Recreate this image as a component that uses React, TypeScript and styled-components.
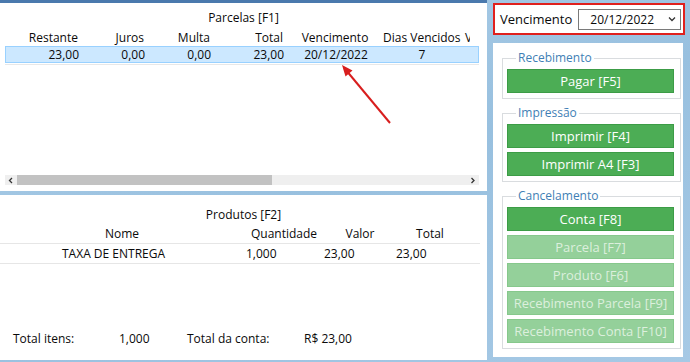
import React from "react";
import styled, { createGlobalStyle } from "styled-components";

type Align = "left" | "right" | "center";

interface IColumn {
  width: number;
  align: Align;
  pad?: number;
  clip?: boolean;
}

const GlobalStyle = createGlobalStyle`
  html, body {
    margin: 0;
    padding: 0;
  }
  body {
    font-family: "Open Sans", "Noto Sans", "DejaVu Sans", sans-serif;
    color: #0a0a0a;
    background: #9fc5e3;
  }
`;

const Screen = styled.div`
  position: relative;
  width: 690px;
  height: 362px;
  box-sizing: border-box;
  overflow: hidden;
  display: flex;
  gap: 6px;
  padding-right: 5px;
  background: linear-gradient(160deg, #b1d1ea 0%, #98c0df 50%, #a6c9e5 100%);
`;

const LeftColumn = styled.div`
  width: 487px;
  display: flex;
  flex-direction: column;
  gap: 4px;
  border-top: 3px solid #4a79ad;
`;

const Panel = styled.section<{ $height: number }>`
  position: relative;
  height: ${props => props.$height}px;
  box-sizing: border-box;
  display: flex;
  flex-direction: column;
  overflow: hidden;
  background: #fff;
`;

const PanelTitle = styled.div<{ $top: number }>`
  padding-top: ${props => props.$top}px;
  font-size: 12px;
  line-height: 16px;
  text-align: center;
`;

const GridArea = styled.div`
  margin: 4px 8px 0 5px;
  overflow: hidden;
`;

const GridRow = styled.div<{ $columns: IColumn[]; $height: number; $selected?: boolean; $line?: boolean }>`
  display: grid;
  grid-template-columns: ${props => props.$columns.map(c => `${c.width}px`).join(" ")};
  height: ${props => props.$height}px;
  box-sizing: border-box;
  align-items: center;
  font-size: 12px;
  line-height: 16px;
  white-space: nowrap;
  background: ${props => (props.$selected ? "#cce8ff" : "transparent")};
  border: ${props => (props.$selected ? "1px solid #99d1ff" : "none")};
  border-bottom: ${props =>
    props.$selected ? "1px solid #99d1ff" : props.$line ? "1px solid #e6e6e6" : "none"};
`;

const Cell = styled.div<{ $align: Align; $pad?: number; $clip?: boolean }>`
  text-align: ${props => props.$align};
  padding-right: ${props => (props.$align === "right" ? props.$pad ?? 4 : 0)}px;
  padding-left: ${props => (props.$align === "left" ? props.$pad ?? 0 : 0)}px;
  overflow: ${props => (props.$clip ? "hidden" : "visible")};
`;

const Separator = styled.div`
  height: 1px;
  margin-top: 1px;
  background: #e8e8e8;
`;

const HScroll = styled.div`
  margin: auto 8px 6px 5px;
  height: 10px;
  display: flex;
  align-items: center;
  background: #efefef;
`;

const ScrollArrow = styled.div`
  width: 12px;
  height: 10px;
  display: flex;
  align-items: center;
  justify-content: center;
`;

const ScrollThumb = styled.div`
  width: 255px;
  height: 10px;
  background: #c2c2c2;
`;

const ScrollTrack = styled.div`
  flex: 1;
`;

const ProdutosArea = styled.div`
  margin: 2px 7px 0 0;
`;

const Footer = styled.div`
  margin-top: auto;
  padding: 0 0 13px 13px;
  display: grid;
  grid-template-columns: 106px 68px 117px auto;
  font-size: 12px;
  line-height: 16px;
`;

const RightColumn = styled.div`
  width: 192px;
  padding-top: 3px;
  display: flex;
  flex-direction: column;
  gap: 8px;
`;

const DueBox = styled.div`
  height: 32px;
  box-sizing: border-box;
  display: flex;
  align-items: center;
  gap: 6px;
  padding: 0 2px 0 5px;
  border: 2px solid #e0201d;
  background: #fff;
`;

const DueLabel = styled.span`
  font-size: 13px;
  line-height: 16px;
`;

const DueSelect = styled.div`
  width: 104px;
  height: 21px;
  box-sizing: border-box;
  display: flex;
  align-items: center;
  justify-content: space-between;
  padding: 0 4px 0 11px;
  border: 1px solid #7a7a7a;
  font-size: 12px;
`;

const ActionPanel = styled.div`
  height: 314px;
  margin-right: 2px;
  box-sizing: border-box;
  display: flex;
  flex-direction: column;
  gap: 6px;
  padding: 7px 2px 0 9px;
  background: #fff;
`;

const Group = styled.fieldset`
  margin: 0;
  min-width: 0;
  padding: 3px 6px 5px 4px;
  border: 1px solid #d9dcdf;
  display: flex;
  flex-direction: column;
  gap: 4px;
`;

const GroupLegend = styled.legend`
  margin-left: 9px;
  padding: 0 2px;
  font-size: 12px;
  line-height: 16px;
  color: #3f7fb5;
`;

const ActionButton = styled.button<{ $off?: boolean }>`
  height: 24px;
  box-sizing: border-box;
  padding: 0;
  border: 1px solid ${props => (props.$off ? "#86c88c" : "#3c9c46")};
  background: ${props => (props.$off ? "#94d09a" : "#4cad55")};
  color: ${props => (props.$off ? "#dcefdd" : "#ffffff")};
  font-family: inherit;
  font-size: 13px;
  line-height: 16px;
  text-align: center;
`;

const Annotation = styled.svg`
  position: absolute;
  left: 0;
  top: 0;
  pointer-events: none;
`;

const parcelaColumns: IColumn[] = [
  { width: 77, align: "right" },
  { width: 66, align: "right" },
  { width: 66, align: "right" },
  { width: 73, align: "right" },
  { width: 96, align: "center" },
  { width: 76, align: "center" },
  { width: 11, align: "left", pad: 6, clip: true },
];

const parcelaHeader = ["Restante", "Juros", "Multa", "Total", "Vencimento", "Dias Vencidos", "Valor Pago"];
const parcelaValues = ["23,00", "0,00", "0,00", "23,00", "20/12/2022", "7", ""];

const produtoHeadCols: IColumn[] = [
  { width: 244, align: "center" },
  { width: 80, align: "center" },
  { width: 72, align: "center" },
  { width: 68, align: "center" },
];

const produtoRowCols: IColumn[] = [
  { width: 244, align: "left", pad: 62 },
  { width: 80, align: "left", pad: 2 },
  { width: 72, align: "left", pad: 0 },
  { width: 68, align: "left", pad: 0 },
];

const Chevron = ({ dir }: { dir: "left" | "right" | "down" }) => {
  const points =
    dir === "left" ? "4,1 1.5,3.5 4,6" : dir === "right" ? "1.5,1 4,3.5 1.5,6" : "1,1.5 4,4.5 7,1.5";
  const w = dir === "down" ? 8 : 6;
  const h = dir === "down" ? 6 : 7;
  return (
    <svg width={w} height={h} viewBox={`0 0 ${w} ${h}`}>
      <polyline points={points} fill="none" stroke="#333" strokeWidth="1.3" />
    </svg>
  );
};

const App: React.FC = () => (
  <>
    <GlobalStyle />
    <Screen>
      <LeftColumn>
        <Panel $height={188}>
          <PanelTitle $top={7}>Parcelas [F1]</PanelTitle>
          <GridArea>
            <GridRow $columns={parcelaColumns} $height={16}>
              {parcelaHeader.map((h, i) => (
                <Cell
                  key={h}
                  $align={parcelaColumns[i].align}
                  $pad={parcelaColumns[i].pad}
                  $clip={parcelaColumns[i].clip}
                >
                  {h}
                </Cell>
              ))}
            </GridRow>
            <GridRow $columns={parcelaColumns} $height={17} $selected>
              {parcelaValues.map((v, i) => (
                <Cell key={i} $align={parcelaColumns[i].align} $pad={parcelaColumns[i].pad}>
                  {v}
                </Cell>
              ))}
            </GridRow>
            <Separator />
          </GridArea>
          <HScroll>
            <ScrollArrow>
              <Chevron dir="left" />
            </ScrollArrow>
            <ScrollThumb />
            <ScrollTrack />
            <ScrollArrow>
              <Chevron dir="right" />
            </ScrollArrow>
          </HScroll>
        </Panel>
        <Panel $height={165}>
          <PanelTitle $top={12}>Produtos [F2]</PanelTitle>
          <ProdutosArea>
            <GridRow $columns={produtoHeadCols} $height={19} $line>
              {["Nome", "Quantidade", "Valor", "Total"].map((h, i) => (
                <Cell key={h} $align={produtoHeadCols[i].align}>
                  {h}
                </Cell>
              ))}
            </GridRow>
            <GridRow $columns={produtoRowCols} $height={20} $line>
              {["TAXA DE ENTREGA", "1,000", "23,00", "23,00"].map((v, i) => (
                <Cell key={i} $align={produtoRowCols[i].align} $pad={produtoRowCols[i].pad}>
                  {v}
                </Cell>
              ))}
            </GridRow>
          </ProdutosArea>
          <Footer>
            <span>Total itens:</span>
            <span>1,000</span>
            <span>Total da conta:</span>
            <span>R$ 23,00</span>
          </Footer>
        </Panel>
      </LeftColumn>

      <RightColumn>
        <DueBox>
          <DueLabel>Vencimento</DueLabel>
          <DueSelect>
            <span>20/12/2022</span>
            <Chevron dir="down" />
          </DueSelect>
        </DueBox>
        <ActionPanel>
          <Group>
            <GroupLegend>Recebimento</GroupLegend>
            <ActionButton>Pagar [F5]</ActionButton>
          </Group>
          <Group>
            <GroupLegend>Impressão</GroupLegend>
            <ActionButton>Imprimir [F4]</ActionButton>
            <ActionButton>Imprimir A4 [F3]</ActionButton>
          </Group>
          <Group>
            <GroupLegend>Cancelamento</GroupLegend>
            <ActionButton>Conta [F8]</ActionButton>
            <ActionButton $off>Parcela [F7]</ActionButton>
            <ActionButton $off>Produto [F6]</ActionButton>
            <ActionButton $off>Recebimento Parcela [F9]</ActionButton>
            <ActionButton $off>Recebimento Conta [F10]</ActionButton>
          </Group>
        </ActionPanel>
      </RightColumn>

      <Annotation width={690} height={362} viewBox="0 0 690 362">
        <line x1="390" y1="123" x2="348" y2="72.5" stroke="#d81e1e" strokeWidth="2" />
        <polygon points="342,65 352.5,70.5 345.5,76.5" fill="#d81e1e" />
      </Annotation>
    </Screen>
  </>
);

export default App;
